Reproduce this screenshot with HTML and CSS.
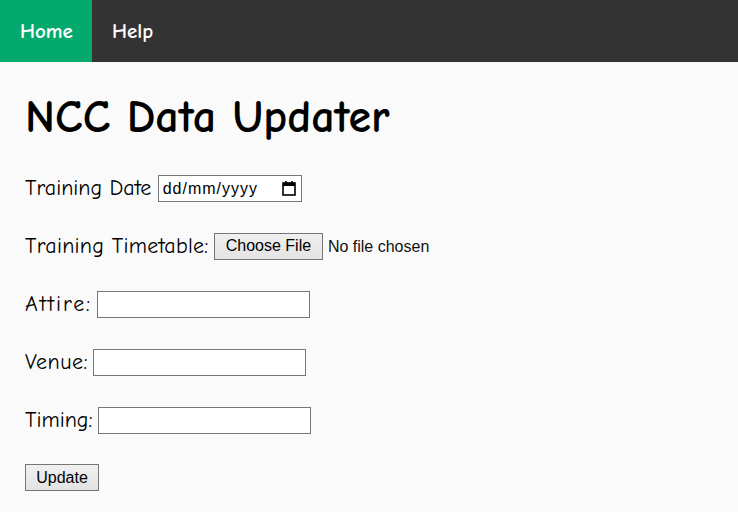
FILE: index.html
```html
<!DOCTYPE html>
<html lang="en-GB">
<head>
<meta charset="utf-8">
<title>NCC Data Updater</title>
<link rel="stylesheet" href="styles.css">
</head>
<body>
<nav class="topnav">
  <a class="nav-link active" href="#">Home</a>
  <a class="nav-link" href="#">Help</a>
</nav>
<main class="content">
  <h1 class="title">NCC Data Updater</h1>
  <form class="form">
    <div class="row"><label class="label label-date">Training Date</label> <span class="date" role="textbox"><span class="date-text">dd/mm/yyyy</span><svg class="cal" width="14" height="16" viewBox="0 0 14 16"><rect x="1" y="3" width="12" height="12" fill="none" stroke="#000" stroke-width="1.6"/><rect x="1" y="3" width="12" height="3" fill="#000"/><rect x="3.2" y="1" width="1.6" height="3" fill="#000"/><rect x="9.2" y="1" width="1.6" height="3" fill="#000"/></svg></span></div>
    <div class="row"><label class="label label-file">Training Timetable:</label> <input class="file" type="file"></div>
    <div class="row"><label class="label label-attire">Attire:</label> <input class="text" type="text"></div>
    <div class="row"><label class="label label-venue">Venue:</label> <input class="text" type="text"></div>
    <div class="row"><label class="label">Timing:</label> <input class="text" type="text"></div>
    <div class="row"><button class="btn" type="button">Update</button></div>
  </form>
</main>
</body>
</html>
```
FILE: styles.css
```css
html, body {
  margin: 0;
  padding: 0;
}
body {
  background: #fafafa;
  font-family: "Comic Sans MS", "Comic Neue", "DejaVu Sans", sans-serif;
  color: #000;
}
.topnav {
  display: flex;
  height: 62px;
  background: #333333;
}
.nav-link {
  display: flex;
  align-items: center;
  padding: 0 20px;
  color: #fff;
  font-weight: bold;
  font-size: 21px;
  text-decoration: none;
}
.nav-link.active {
  background: #04aa6d;
  padding: 0 19px 0 20px;
}
.content {
  padding: 0 25px;
}
.title {
  margin: 0;
  padding-top: 28px;
  font-size: 46px;
  line-height: 56px;
  font-weight: bold;
}
.form {
  margin-top: 28px;
}
.row {
  height: 27px;
  margin-bottom: 31px;
  line-height: 27px;
  white-space: nowrap;
}
.label {
  font-size: 22px;
  vertical-align: middle;
}
.label-date {
  margin-right: 1px;
}
.label-file {
  letter-spacing: 0.25px;
}
.label-attire {
  letter-spacing: 1.9px;
}
.label-venue {
  letter-spacing: 0.5px;
}
.date {
  display: inline-flex;
  align-items: center;
  justify-content: space-between;
  width: 144px;
  height: 27px;
  box-sizing: border-box;
  padding: 0 5px 0 4px;
  border: 1px solid #767676;
  background: #fff;
  vertical-align: middle;
}
.date-text {
  font-family: "Liberation Sans", Arial, sans-serif;
  font-size: 16px;
  letter-spacing: 1px;
  color: #000;
}
.cal {
  display: block;
}
.file {
  font-family: "Liberation Sans", Arial, sans-serif;
  font-size: 16px;
  vertical-align: middle;
  color: #111;
}
.file::file-selector-button {
  font-family: "Liberation Sans", Arial, sans-serif;
  font-size: 16px;
  width: 109px;
  height: 27px;
  margin-right: 5px;
  border: 1px solid #767676;
  border-radius: 0;
  background: linear-gradient(#f0f0f0, #e3e3e3);
  color: #000;
}
.text {
  width: 213px;
  height: 27px;
  box-sizing: border-box;
  border: 1px solid #767676;
  background: #fff;
  vertical-align: middle;
}
.btn {
  font-family: "Liberation Sans", Arial, sans-serif;
  font-size: 16px;
  width: 74px;
  height: 27px;
  padding: 0;
  border: 1px solid #767676;
  border-radius: 0;
  background: linear-gradient(#f0f0f0, #e3e3e3);
  color: #000;
}
```
